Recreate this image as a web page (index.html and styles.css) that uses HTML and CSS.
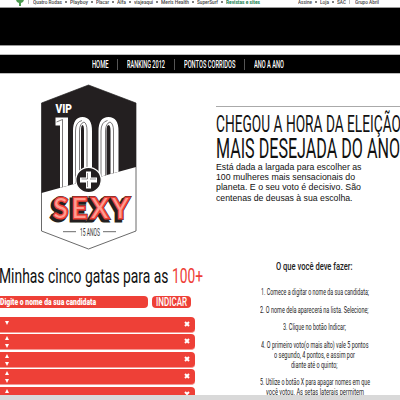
FILE: index.html
```
<!DOCTYPE html>
<html lang="pt-BR">
<head>
<meta charset="utf-8">
<title>VIP 100+ Sexy</title>
<link rel="stylesheet" href="styles.css">
<script src="app.js" defer></script>
</head>
<body>
<header>
  <div class="abril">
    <svg class="tree" width="12" height="8" viewBox="0 0 12 8"><path d="M2 0h8L9 2 7 3v3H5V3L3 2Z" fill="#4c9a50"/></svg>
    <i class="sep first"></i>
    <span class="fit" data-w="29">Quatro Rodas</span><b></b>
    <span class="fit" data-w="18">Playboy</span><b></b>
    <span class="fit" data-w="13">Placar</span><b></b>
    <span class="fit" data-w="9">Alfa</span><b></b>
    <span class="fit" data-w="19">viajeaqui</span><b></b>
    <span class="fit" data-w="28">Men's Health</span><b></b>
    <span class="fit" data-w="21">SuperSurf</span><b></b>
    <span class="fit green" data-w="34">Revistas e sites</span>
    <span class="fit account" data-w="14">Assine</span><b></b>
    <span class="fit" data-w="9">Loja</span><b></b>
    <span class="fit" data-w="9">SAC</span>
    <i class="sep"></i>
    <span class="fit" data-w="24">Grupo Abril</span>
  </div>
  <div class="banner"></div>
  <nav>
    <span class="fit" data-w="16.5">HOME</span><i></i>
    <span class="fit" data-w="38">RANKING 2012</span><i></i>
    <span class="fit" data-w="51.5">PONTOS CORRIDOS</span><i></i>
    <span class="fit" data-w="30">ANO A ANO</span>
  </nav>
</header>
<main>
  <section class="left">
    <svg class="logo" width="96" height="166" viewBox="41 84 96 166">
      <path d="M88.5 85 136 103V231L88.5 249 41.5 231V103Z" fill="#fff" stroke="#444" stroke-width=".8"/>
      <path d="M88.5 85 136 103V167L41.5 193V103Z" fill="#231f20"/>
      <text x="55.5" y="113" class="vip" textLength="16.5" lengthAdjust="spacingAndGlyphs">VIP</text>
      <clipPath id="c"><path d="M41 84H136V167L41 193Z"/></clipPath>
      <g clip-path="url(#c)" fill="none">
        <g stroke="#fff" stroke-width="8"><path d="M55.5 121.5H64V195"/><path d="M77 190V131Q77 121 82.5 121T88 131V190M102.5 190V131Q102.5 121 108.5 121T114.5 131V190"/></g>
        <g stroke="#231f20" stroke-width=".6"><path d="M56.5 122 62.5 119.5V195"/><path d="M75.5 190V131Q75.5 122 82 120.5M79.5 190V131Q79.5 123.5 84 122Q87 123.5 87 131V190M101 190V131Q101 122 107.5 120.5M105.5 190V131Q105.5 123.5 110 122Q113.5 123.5 113.5 131V190"/></g>
      </g>
      <circle cx="88.5" cy="180" r="12.7" fill="#231f20" stroke="#fff" stroke-width="1.2"/>
      <path d="M88.5 171.5V188.5M80 180H97" stroke="#fff" stroke-width="5"/>
      <path d="M87.5 173V179H81.5M87.5 187V181M90 179H96" fill="none" stroke="#231f20" stroke-width=".5"/>
      <g class="sexy">
        <text x="51.5" y="220" textLength="75" lengthAdjust="spacing" fill="#231f20" stroke="#231f20" stroke-width="5">SEXY</text>
        <text x="53.5" y="218" textLength="75" lengthAdjust="spacing" fill="#ee4037" stroke="#231f20" stroke-width="4">SEXY</text>
        <text x="53.5" y="218" textLength="75" lengthAdjust="spacing" fill="#ff9c91" stroke="#ee4037" stroke-width="3" class="inline">SEXY</text>
      </g>
      <path d="M63 231.7H76M103 231.7H116" stroke="#444" stroke-width=".8"/>
      <text x="80" y="236.3" class="anos" textLength="20" lengthAdjust="spacingAndGlyphs">15 ANOS</text>
    </svg>
    <h1><span class="fit" data-w="169.5">Minhas cinco gatas para as</span><span class="fit red" data-w="31">100+</span></h1>
    <div class="form"><div class="input"><span class="fit" data-w="96">Digite o nome da sua candidata</span></div><div class="btn"><span class="fit" data-w="31">INDICAR</span></div></div>
    <div class="rows">
      <div class="row"><svg width="4" height="12"><path d="M0 2H4L2 6Z"/></svg><svg class="x" width="6" height="6"><path d="M1 1 5 5M5 1 1 5"/></svg></div>
      <div class="row"><svg width="4" height="12"><path d="M0 4H4L2 0ZM0 8H4L2 12Z"/></svg><svg class="x" width="6" height="6"><path d="M1 1 5 5M5 1 1 5"/></svg></div>
      <div class="row"><svg width="4" height="12"><path d="M0 4H4L2 0ZM0 8H4L2 12Z"/></svg><svg class="x" width="6" height="6"><path d="M1 1 5 5M5 1 1 5"/></svg></div>
      <div class="row"><svg width="4" height="12"><path d="M0 4H4L2 0ZM0 8H4L2 12Z"/></svg><svg class="x" width="6" height="6"><path d="M1 1 5 5M5 1 1 5"/></svg></div>
      <div class="row"><svg width="4" height="12"><path d="M0 4H4L2 0Z"/></svg><svg class="x" width="6" height="6"><path d="M1 1 5 5M5 1 1 5"/></svg></div>
    </div>
  </section>
  <section class="right">
    <h2 class="h-a"><span class="fit" data-w="185">CHEGOU A HORA DA ELEIÇÃO</span></h2>
    <h2 class="h-b"><span class="fit" data-w="184">MAIS DESEJADA DO ANO</span></h2>
    <div class="intro">
      <span class="fit" data-w="145.5">Está dada a largada para escolher as</span>
      <span class="fit" data-w="139">100 mulheres mais sensacionais do</span>
      <span class="fit" data-w="145">planeta. E o seu voto é decisivo. São</span>
      <span class="fit" data-w="136.5">centenas de deusas à sua escolha.</span>
    </div>
    <div class="steps">
      <h3><span class="fit" data-w="76.5">O que você deve fazer:</span></h3>
      <p><span class="fit" data-w="108">1. Comece a digitar o nome da sua candidata;</span></p>
      <p><span class="fit" data-w="108.5">2. O nome dela aparecerá na lista. Selecione;</span></p>
      <p><span class="fit" data-w="63">3. Clique no botão Indicar;</span></p>
      <p><span class="fit" data-w="107.5">4. O primeiro voto(o mais alto) vale 5 pontos</span><span class="fit" data-w="81">o segundo, 4 pontos, e assim por</span><span class="fit" data-w="46.5">diante até o quinto;</span></p>
      <p><span class="fit" data-w="110">5. Utilize o botão X para apagar nomes em que</span><span class="fit" data-w="98">você votou. As setas laterais permitem</span></p>
    </div>
  </section>
</main>
<footer></footer>
</body>
</html>
```
FILE: styles.css
```
* { box-sizing: border-box; }
html, body { margin: 0; width: 400px; height: 400px; overflow: hidden; background: #fff; }
body { display: flex; flex-direction: column; font-family: Roboto, sans-serif; color: #111; }
h1, h2, h3, p { margin: 0; font-weight: 400; }
svg { display: block; flex: none; }
.fit { display: block; flex: none; white-space: nowrap; }
.fit > span { display: inline-block; transform-origin: 0 50%; }
header { flex: none; }
.abril { height: 8px; display: flex; padding-left: 14px; font: 500 6px/7px Roboto, sans-serif; color: #444; overflow: hidden; }
.abril .fit { margin-top: -2px; }
.abril b { width: 2px; height: 2px; margin: 1px 3px 0; border-radius: 1px; background: #555; flex: none; }
.abril .sep { width: 1px; height: 4px; margin: 0 5px 0 3px; background: #bbb; flex: none; }
.abril .sep.first { margin: 0 4px 0 2px; }
.abril .green { color: #16834f; font-weight: 700; }
.abril .account { margin-left: 38px; }
.banner { height: 37px; background: #000; box-shadow: 0 0 0 1px #999; }
nav { margin-top: 10px; height: 18px; background: #000; box-shadow: 0 0 0 1px #bbb; display: flex; align-items: center; padding-left: 92px; color: #fff; font: 500 10px/19px Roboto, sans-serif; }
nav i { width: 1px; height: 11px; background: #555; margin: 0 8.8px; }
main { display: flex; flex: 1; min-height: 0; overflow: hidden; }
.left { width: 216px; padding-top: 11px; }
.logo { margin-left: 41px; }
.vip { font: 900 12px Roboto, sans-serif; fill: #fff; }
.sexy text { font: 400 26px Lato, sans-serif; stroke-linejoin: miter; }
.sexy .inline { paint-order: stroke; }
.anos { font: 400 11px Roboto, sans-serif; fill: #333; }
h1 { display: flex; gap: 3.5px; margin: 13px 0 0 -1px; font-size: 21px; line-height: 26px; height: 26px; }
.red { color: #ee4037; }
.form { display: flex; gap: 4px; margin-top: 7px; height: 12px; color: #fff; }
.input { width: 148px; background: #ee4037; border-radius: 0 4px 4px 0; font: 900 9px/12px Roboto, sans-serif; }
.btn { width: 39px; background: #ee4037; border-radius: 4px; padding-left: 4px; font: 500 12px/13px Roboto, sans-serif; }
.rows { margin-top: 9px; display: grid; gap: 1.4px; }
.row { width: 195px; height: 16px; background: #ee4037; border-radius: 0 4px 4px 0; border-bottom: 1px solid #f59a94; display: flex; justify-content: space-between; padding: 2px 5px 0 5px; }
.row path { fill: #fff; }
.row .x { margin-top: 2px; }
.row .x path { stroke: #fff; stroke-width: 2; }
.right { width: 184px; margin-top: 33px; border-top: 1px solid #aaa; overflow: hidden; }
.h-a { font-size: 23px; line-height: 24px; height: 24px; margin-top: 6px; }
.h-b { font-size: 27px; line-height: 26px; height: 26px; margin-top: -1px; }
.intro { font: 9px/10.2px "Liberation Sans", sans-serif; }
.steps { margin-top: 57px; padding-left: 13px; width: 184px; display: flex; flex-direction: column; align-items: center; color: #222; font-size: 9px; line-height: 9.7px; }
.steps h3 { font-size: 11px; line-height: 14px; font-weight: 500; margin-bottom: 14px; }
.steps p { display: flex; flex-direction: column; align-items: center; margin-bottom: 8.1px; }
footer { flex: none; height: 5px; background: #d9d9d9; }
```
FILE: app.js
```
// Condense each label to the width given in data-w.
document.querySelectorAll('.fit').forEach(function (el) {
  var inner = document.createElement('span');
  inner.textContent = el.textContent;
  el.textContent = '';
  el.appendChild(inner);
  var w = parseFloat(el.dataset.w);
  var natural = inner.getBoundingClientRect().width;
  el.style.width = w + 'px';
  inner.style.transform = 'scaleX(' + w / natural + ')';
});
```
